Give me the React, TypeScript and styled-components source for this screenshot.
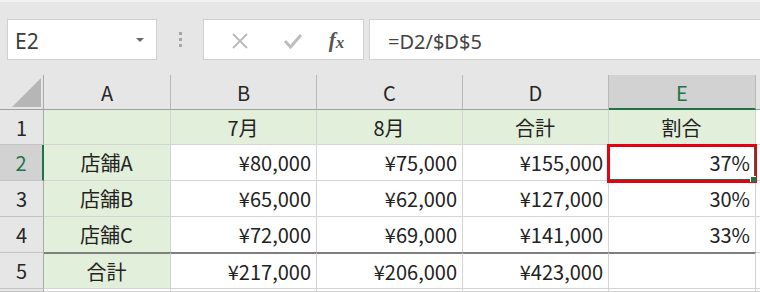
import { Fragment } from 'react';
import styled, { createGlobalStyle } from 'styled-components';

const GlobalStyle = createGlobalStyle`
  html, body {
    margin: 0;
    padding: 0;
    background: #e6e6e6;
    overflow: hidden;
  }
`;

const columns = ['A', 'B', 'C', 'D', 'E'];
const columnWidths = '44px 127px 146px 146px 146px 147px 1fr';

type Row = { label: string; cells: string[] };

const rows: Row[] = [
  { label: '1', cells: ['', '7月', '8月', '合計', '割合'] },
  { label: '2', cells: ['店舗A', '¥80,000', '¥75,000', '¥155,000', '37%'] },
  { label: '3', cells: ['店舗B', '¥65,000', '¥62,000', '¥127,000', '30%'] },
  { label: '4', cells: ['店舗C', '¥72,000', '¥69,000', '¥141,000', '33%'] },
  { label: '5', cells: ['合計', '¥217,000', '¥206,000', '¥423,000', ''] },
];

export default function App() {
  return (
    <Page>
      <GlobalStyle />
      <Toolbar>
        <NameBox>
          <NameText>E2</NameText>
          <Caret />
        </NameBox>
        <Grip>
          <Dot />
          <Dot />
          <Dot />
        </Grip>
        <FormulaButtons>
          <IconButton>
            <svg width="18" height="18" viewBox="0 0 18 18">
              <path d="M2 2 L16 16 M16 2 L2 16" stroke="#b9b9b9" strokeWidth="1.8" fill="none" />
            </svg>
          </IconButton>
          <IconButton>
            <svg width="20" height="18" viewBox="0 0 20 18">
              <path d="M2 9 L7.5 15 L18 3" stroke="#bdbdbd" strokeWidth="3" fill="none" />
            </svg>
          </IconButton>
          <FxLabel>
            f<sub>x</sub>
          </FxLabel>
        </FormulaButtons>
        <FormulaInput>=D2/$D$5</FormulaInput>
      </Toolbar>

      <Sheet>
        <Corner>
          <svg width="29" height="29" viewBox="0 0 29 29">
            <polygon points="29,0 29,29 0,29" fill="#b6b6b6" />
          </svg>
        </Corner>
        {columns.map((col) => (
          <ColHeader key={col} $active={col === 'E'}>
            {col}
          </ColHeader>
        ))}
        <ColHeader />

        {rows.map((row, r) => (
          <Fragment key={row.label}>
            <RowHeader $active={row.label === '2'}>{row.label}</RowHeader>
            {row.cells.map((value, c) => (
              <Cell
                key={c}
                $fill={r === 0 || c === 0}
                $align={r === 0 || c === 0 ? 'center' : 'right'}
                $rule={row.label === '5'}
              >
                {value}
                {row.label === '2' && c === 4 && (
                  <>
                    <Selection />
                    <Highlight />
                    <FillHandle />
                  </>
                )}
              </Cell>
            ))}
            <Cell $align="left" />
          </Fragment>
        ))}

        <RowHeader />
        {columns.map((col) => (
          <Cell key={`b${col}`} $align="left" />
        ))}
        <Cell $align="left" />
      </Sheet>
    </Page>
  );
}

const Page = styled.div`
  width: 760px;
  height: 292px;
  overflow: hidden;
  background: #e6e6e6;
  border-top: 2px solid #f2f2f2;
  box-sizing: border-box;
`;

const Toolbar = styled.div`
  display: flex;
  align-items: stretch;
  height: 41px;
  padding: 17px 0 15px 7px;
`;

const NameBox = styled.div`
  width: 150px;
  box-sizing: border-box;
  background: #ffffff;
  border: 1px solid #d0d0d0;
  display: flex;
  align-items: center;
  justify-content: space-between;
  padding: 3px 12px 0 7px;
`;

const NameText = styled.span`
  font-family: 'Noto Sans', sans-serif;
  font-size: 21px;
  color: #3c3c3c;
`;

const Caret = styled.span`
  width: 0;
  height: 0;
  border-left: 4px solid transparent;
  border-right: 4px solid transparent;
  border-top: 4px solid #6a6a6a;
  margin-bottom: 3px;
`;

const Grip = styled.div`
  width: 45px;
  display: flex;
  flex-direction: column;
  align-items: center;
  justify-content: center;
  gap: 3px;
  padding-left: 1px;
`;

const Dot = styled.span`
  width: 3px;
  height: 3px;
  background: #a6a6a6;
`;

const FormulaButtons = styled.div`
  width: 161px;
  box-sizing: border-box;
  background: #ffffff;
  border: 1px solid #d0d0d0;
  display: grid;
  grid-template-columns: 56px 50px 1fr;
  align-items: center;
  justify-items: center;
  padding: 0 8px 0 8px;
  margin-right: 5px;
`;

const IconButton = styled.span`
  display: flex;
  align-items: center;
  justify-content: center;
  padding-top: 2px;
`;

const FxLabel = styled.span`
  font-family: 'Liberation Serif', serif;
  font-style: italic;
  font-weight: bold;
  font-size: 21px;
  color: #555555;
  padding-top: 1px;

  sub {
    font-size: 17px;
    vertical-align: -1px;
  }
`;

const FormulaInput = styled.div`
  flex: 1;
  background: #ffffff;
  border: 1px solid #d0d0d0;
  border-right: none;
  display: flex;
  align-items: center;
  padding: 3px 0 0 18px;
  font-family: 'Noto Sans', sans-serif;
  font-size: 20px;
  color: #444444;
`;

const Sheet = styled.div`
  display: grid;
  grid-template-columns: ${columnWidths};
  grid-template-rows: 35px 35px 36px 36px 36px 36px 1fr;
  height: 217px;
  font-family: 'Noto Sans CJK JP', 'Noto Sans', sans-serif;
  font-size: 20px;
  color: #222222;
`;

const Corner = styled.div`
  box-sizing: border-box;
  border-right: 1px solid #a9a9a9;
  border-bottom: 1px solid #9f9f9f;
  display: flex;
  align-items: flex-end;
  justify-content: flex-end;
  padding: 0 2px 2px 0;
`;

const ColHeader = styled.div<{ $active?: boolean }>`
  box-sizing: border-box;
  background: ${({ $active }) => ($active ? '#d2d2d2' : '#e6e6e6')};
  color: ${({ $active }) => ($active ? '#217346' : '#262626')};
  border-right: 1px solid #b8b8b8;
  border-bottom: ${({ $active }) => ($active ? '2px solid #217346' : '1px solid #9f9f9f')};
  display: flex;
  align-items: center;
  justify-content: center;
  padding-top: ${({ $active }) => ($active ? '1px' : '0')};
`;

const RowHeader = styled.div<{ $active?: boolean }>`
  box-sizing: border-box;
  background: ${({ $active }) => ($active ? '#d2d2d2' : '#e6e6e6')};
  color: ${({ $active }) => ($active ? '#217346' : '#262626')};
  border-right: ${({ $active }) => ($active ? '2px solid #217346' : '1px solid #a9a9a9')};
  border-bottom: 1px solid #c4c4c4;
  display: flex;
  align-items: center;
  justify-content: center;
`;

const Cell = styled.div<{ $fill?: boolean; $align: 'left' | 'center' | 'right'; $rule?: boolean }>`
  position: relative;
  box-sizing: border-box;
  background: ${({ $fill }) => ($fill ? '#e2efda' : '#ffffff')};
  border-right: 1px solid #d4d4d4;
  border-bottom: 1px solid #d4d4d4;
  border-top: ${({ $rule }) => ($rule ? '2px solid #7f7f7f' : 'none')};
  margin-top: ${({ $rule }) => ($rule ? '-1px' : '0')};
  display: flex;
  align-items: center;
  justify-content: ${({ $align }) =>
    $align === 'center' ? 'center' : $align === 'right' ? 'flex-end' : 'flex-start'};
  padding: 0 5px 0 4px;
  white-space: nowrap;
`;

const Selection = styled.span`
  position: absolute;
  inset: -1px;
  border: 2px solid #217346;
  pointer-events: none;
  z-index: 1;
`;

const Highlight = styled.span`
  position: absolute;
  top: -1px;
  left: -2px;
  right: -2px;
  bottom: -3px;
  border: 3px solid #e60012;
  border-right-width: 2px;
  pointer-events: none;
  z-index: 2;
`;

const FillHandle = styled.span`
  position: absolute;
  right: -1px;
  bottom: -2px;
  width: 5px;
  height: 5px;
  background: #217346;
  border-left: 1px solid #ffffff;
  border-top: 1px solid #ffffff;
  z-index: 3;
`;
